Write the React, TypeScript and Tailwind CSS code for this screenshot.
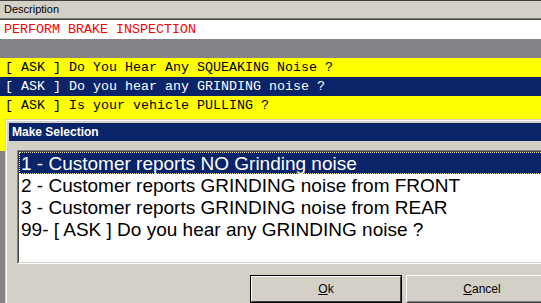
import React from "react";

const mono = { fontFamily: '"Liberation Mono", "Courier New", monospace' };
const sans = { fontFamily: '"Liberation Sans", Arial, sans-serif' };

const items = [
  "1 - Customer reports NO Grinding noise",
  "2 - Customer reports GRINDING noise from FRONT",
  "3 - Customer reports GRINDING noise from REAR",
  "99- [ ASK ] Do you hear any GRINDING noise ?",
];

export default function App() {
  return (
    <div className="relative w-[541px] h-[303px] overflow-hidden bg-[#858387]">
      {/* Header */}
      <div className="h-[20px] bg-[#d4d0c8] border-t border-[#404040] flex flex-col">
        <div className="flex-1 flex items-center pl-[4px] text-[11px] text-black leading-none" style={sans}>
          Description
        </div>
        <div className="h-px bg-[#808080]" />
        <div className="h-px bg-[#404040]" />
      </div>
      {/* description value */}
      <div className="h-[19px] bg-white flex items-center pl-[4px] text-[13.33px] text-[#ff0000] leading-none whitespace-pre" style={mono}>
        PERFORM BRAKE INSPECTION
      </div>
      <div className="h-[19px] bg-[#858387]" />
      {/* rows */}
      <div className="h-[19px] bg-[#ffff00] flex items-center pl-[5px] text-[13.33px] text-black leading-none whitespace-pre" style={mono}>
        [ ASK ] Do You Hear Any SQUEAKING Noise ?
      </div>
      <div className="h-[19px] bg-[#0a246a] flex items-center pl-[5px] text-[13.33px] text-white leading-none whitespace-pre" style={mono}>
        [ ASK ] Do you hear any GRINDING noise ?
      </div>
      <div className="h-[19px] bg-[#ffff00] flex items-center pl-[5px] text-[13.33px] text-black leading-none whitespace-pre" style={mono}>
        [ ASK ] Is your vehicle PULLING ?
      </div>
      <div className="h-[36px] bg-[#ffff00]" />

      {/* Dialog */}
      <div className="absolute left-[5px] top-[119px] w-[570px] h-[200px] border border-t-[#d4d0c8] border-l-[#d4d0c8] border-b-[#404040] border-r-[#404040] bg-[#d4d0c8]">
        <div className="h-full border border-t-white border-l-white border-b-[#808080] border-r-[#808080] p-[2px] flex flex-col">
          <div className="h-[18px] bg-[#0a246a] flex items-center pl-[3px] text-[12px] font-bold text-white leading-none" style={sans}>
            Make Selection
          </div>
          {/* listbox */}
          <div className="mt-[9px] ml-[8px] w-[560px] h-[114px] border border-t-[#808080] border-l-[#808080] border-b-white border-r-white">
            <div className="h-full border border-t-[#404040] border-l-[#404040] border-b-[#d4d0c8] border-r-[#d4d0c8] bg-white flex flex-col">
              {items.map((t, i) => (
                <div
                  key={i}
                  className={
                    i === 0
                      ? "h-[22px] flex items-center pl-px bg-[#0a246a] text-white border border-dotted border-[#e8e0a0] text-[19px] leading-none whitespace-pre"
                      : "h-[22px] flex items-center pl-[2px] text-black text-[19px] leading-none whitespace-pre"
                  }
                  style={sans}
                >
                  {t}
                </div>
              ))}
            </div>
          </div>
          {/* buttons */}
          <div className="mt-[11px] ml-[241px] flex gap-[4px]">
            <div className="w-[152px] h-[28px] border border-black">
              <div className="h-full border border-t-white border-l-white border-b-[#404040] border-r-[#404040] flex items-center justify-center text-[12px] text-black leading-none" style={sans}>
                <span><u>O</u>k</span>
              </div>
            </div>
            <div className="w-[152px] h-[28px] border border-t-white border-l-white border-b-[#404040] border-r-[#404040]">
              <div className="h-full border border-t-[#d4d0c8] border-l-[#d4d0c8] border-b-[#808080] border-r-[#808080] flex items-center justify-center text-[12px] text-black leading-none" style={sans}>
                <span><u>C</u>ancel</span>
              </div>
            </div>
          </div>
        </div>
      </div>
    </div>
  );
}
